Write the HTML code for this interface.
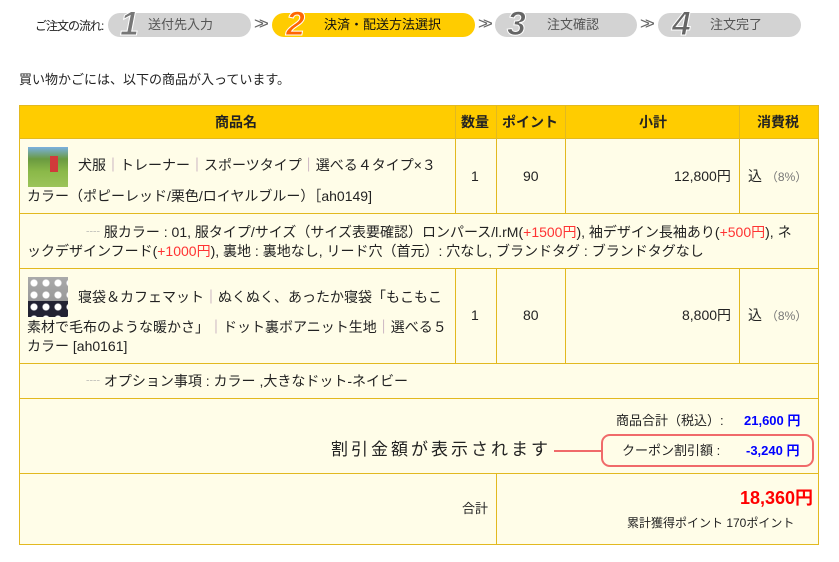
<!DOCTYPE html><html><head><meta charset="utf-8"><style>
body{margin:0;width:839px;height:562px;background:#fff;position:relative;overflow:hidden;font-family:"Liberation Sans","Noto Sans CJK JP",sans-serif;font-size:13px;color:#222}
.a{position:absolute;white-space:nowrap;line-height:16px}
.t{font-size:14px}
.bx{position:absolute;box-sizing:border-box}
.h{background:#fc0;}
.c{background:#fffde8}
.vl{position:absolute;width:1px;background:#e2b920}
.hl{position:absolute;height:1px;background:#e2b920}
.pill{position:absolute;top:13px;height:24px;border-radius:12px;background:#d3d3d3;color:#555;font-size:13px}
.num{position:absolute;top:-6px;font:italic bold 34px "Liberation Sans",sans-serif;color:#777;-webkit-text-stroke:1px #fff;line-height:34px}
.pt{position:absolute;top:4px;line-height:16px}
.sep{position:absolute;top:15px;color:#666;font-size:17px;letter-spacing:-5px;line-height:18px}
.p{color:#a8a}
.r{color:#f33}
.b{color:#00f;font-weight:bold}
</style></head><body>
<div class="a" style="left:35px;top:18px;font-size:12px;letter-spacing:-1px">ご注文の流れ:</div>
<div class="pill" style="left:108px;width:143px"><span class="num" style="left:12px">1</span><span class="pt" style="left:40px">送付先入力</span></div>
<div class="sep" style="left:254px">&gt;&gt;</div>
<div class="pill" style="left:272px;width:203px;background:#fc0;color:#111"><span class="num" style="left:14px;color:#f60">2</span><span class="pt" style="left:52px">決済・配送方法選択</span></div>
<div class="sep" style="left:478px">&gt;&gt;</div>
<div class="pill" style="left:495px;width:142px"><span class="num" style="left:12px;color:#666">3</span><span class="pt" style="left:52px">注文確認</span></div>
<div class="sep" style="left:640px">&gt;&gt;</div>
<div class="pill" style="left:658px;width:143px"><span class="num" style="left:14px;color:#666">4</span><span class="pt" style="left:52px">注文完了</span></div>

<div class="a" style="left:19px;top:72px">買い物かごには、以下の商品が入っています。</div>

<div class="bx h" style="left:19px;top:105px;width:800px;height:34px"></div>
<div class="bx c" style="left:19px;top:139px;width:800px;height:406px"></div>
<div class="hl" style="left:19px;top:105px;width:800px"></div>
<div class="hl" style="left:19px;top:138px;width:800px"></div>
<div class="hl" style="left:19px;top:213px;width:800px"></div>
<div class="hl" style="left:19px;top:268px;width:800px"></div>
<div class="hl" style="left:19px;top:363px;width:800px"></div>
<div class="hl" style="left:19px;top:398px;width:800px"></div>
<div class="hl" style="left:19px;top:473px;width:800px"></div>
<div class="hl" style="left:19px;top:544px;width:800px"></div>
<div class="vl" style="left:19px;top:105px;height:440px"></div>
<div class="vl" style="left:818px;top:105px;height:440px"></div>
<div class="vl" style="left:455px;top:105px;height:108px"></div>
<div class="vl" style="left:496px;top:105px;height:108px"></div>
<div class="vl" style="left:565px;top:105px;height:108px"></div>
<div class="vl" style="left:739px;top:105px;height:108px"></div>
<div class="vl" style="left:455px;top:268px;height:95px"></div>
<div class="vl" style="left:496px;top:268px;height:95px"></div>
<div class="vl" style="left:565px;top:268px;height:95px"></div>
<div class="vl" style="left:739px;top:268px;height:95px"></div>
<div class="vl" style="left:496px;top:473px;height:72px"></div>

<div class="a t" style="left:215px;top:114px;font-weight:bold">商品名</div>
<div class="a t" style="left:461px;top:114px;font-weight:bold">数量</div>
<div class="a t" style="left:502px;top:114px;font-weight:bold">ポイント</div>
<div class="a t" style="left:639px;top:114px;font-weight:bold">小計</div>
<div class="a t" style="left:757px;top:114px;font-weight:bold">消費税</div>

<div class="bx" style="left:28px;top:147px;width:40px;height:40px;background:linear-gradient(#7ab0e0 0,#6a9a40 30%,#8ab848 60%,#9cc45a 100%)"><div class="bx" style="left:22px;top:9px;width:8px;height:16px;background:#d03a3a"></div></div>
<div class="a t" style="left:78px;top:157px">犬服<span class="p">｜</span>トレーナー<span class="p">｜</span>スポーツタイプ<span class="p">｜</span>選べる４タイプ×３</div>
<div class="a t" style="left:27px;top:188px">カラー（ポピーレッド/栗色/ロイヤルブルー）［ah0149]</div>
<div class="a t" style="left:471px;top:168px">1</div>
<div class="a t" style="left:523px;top:168px">90</div>
<div class="a t" style="left:674px;top:168px">12,800円</div>
<div class="a t" style="left:748px;top:168px">込 <span style="color:#777;font-size:12px">（8%）</span></div>

<div class="a t" style="left:86px;top:224px"><span style="color:#aaa">┈</span> 服カラー : 01, 服タイプ/サイズ（サイズ表要確認）ロンパース/l.rM(<span class="r">+1500円</span>), 袖デザイン長袖あり(<span class="r">+500円</span>), ネ</div>
<div class="a t" style="left:27px;top:243px">ックデザインフード(<span class="r">+1000円</span>), 裏地 : 裏地なし, リード穴（首元）: 穴なし, ブランドタグ : ブランドタグなし</div>

<div class="bx" style="left:28px;top:277px;width:40px;height:40px;background:radial-gradient(circle,#fff 3px,transparent 4px) 0 0/12px 12px,linear-gradient(#aaa 0,#999 60%,#223 60%)"></div>
<div class="a t" style="left:78px;top:289px">寝袋＆カフェマット<span class="p">｜</span>ぬくぬく、あったか寝袋「もこもこ</div>
<div class="a t" style="left:27px;top:319px">素材で毛布のような暖かさ」<span class="p">｜</span>ドット裏ボアニット生地<span class="p">｜</span>選べる５</div>
<div class="a t" style="left:27px;top:338px">カラー [ah0161]</div>
<div class="a t" style="left:471px;top:307px">1</div>
<div class="a t" style="left:523px;top:307px">80</div>
<div class="a t" style="left:682px;top:307px">8,800円</div>
<div class="a t" style="left:748px;top:307px">込 <span style="color:#777;font-size:12px">（8%）</span></div>

<div class="a t" style="left:86px;top:373px"><span style="color:#aaa">┈</span> オプション事項 : カラー ,大きなドット-ネイビー</div>

<div class="a" style="left:616px;top:413px">商品合計（税込）:</div>
<div class="a b" style="left:744px;top:413px">21,600 円</div>
<div class="a" style="left:331px;top:440px;font-size:17px;line-height:20px;letter-spacing:3px">割引金額が表示されます</div>
<div class="hl" style="left:554px;top:450px;width:48px;background:#f06a6a;height:2px"></div>
<div class="bx" style="left:601px;top:434px;width:213px;height:33px;border:2px solid #f06a6a;border-radius:9px"></div>
<div class="a" style="left:622px;top:443px">クーポン割引額 :</div>
<div class="a b" style="left:746px;top:443px">-3,240 円</div>

<div class="a" style="left:462px;top:501px">合計</div>
<div class="a" style="left:740px;top:487px;color:#f00;font-weight:bold;font-size:18px;line-height:22px">18,360円</div>
<div class="a" style="left:627px;top:515px;font-size:12px">累計獲得ポイント 170ポイント</div>
</body></html>
